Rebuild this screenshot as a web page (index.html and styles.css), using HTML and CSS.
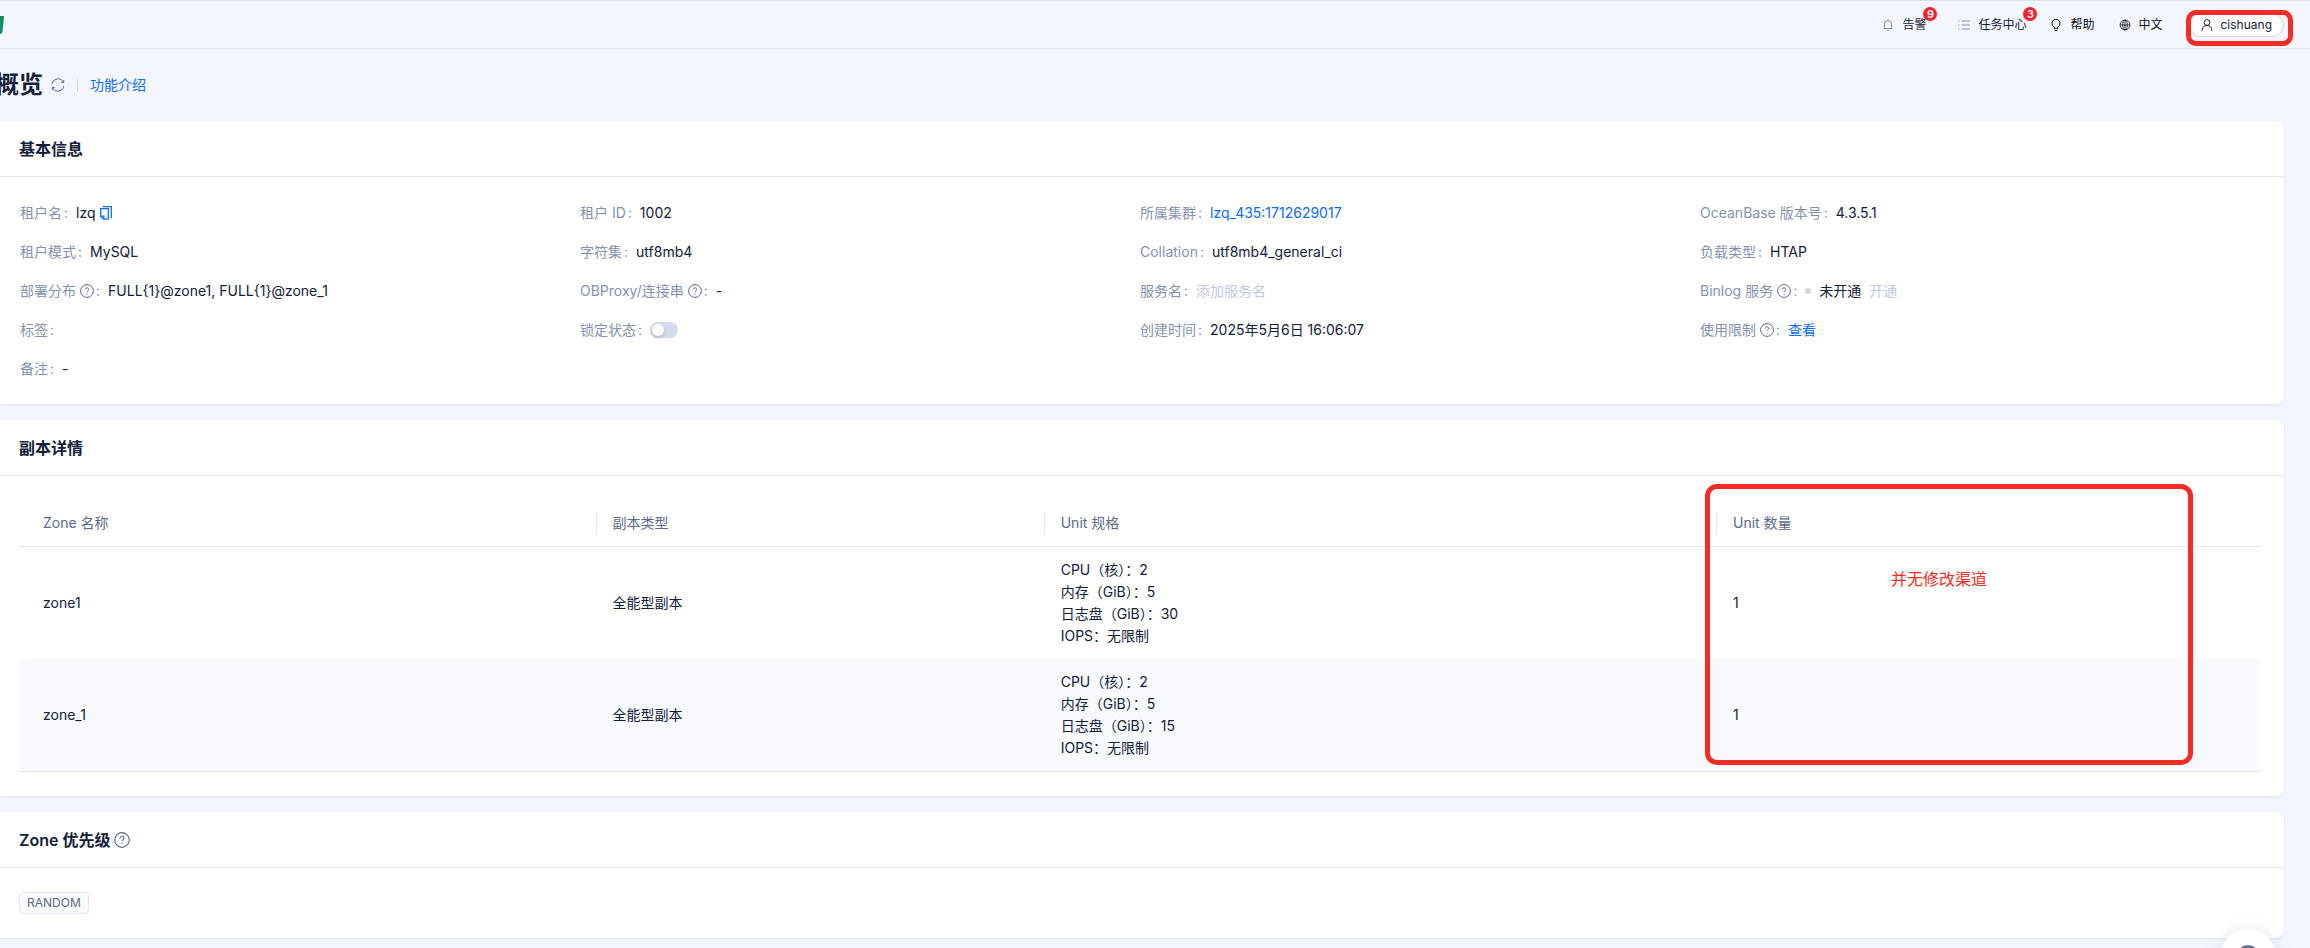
FILE: index.html
```html
<!DOCTYPE html>
<html lang="zh-CN">
<head>
<meta charset="utf-8">
<title>概览</title>
<link rel="stylesheet" href="styles.css">
</head>
<body>
<svg class="sprite" aria-hidden="true">
  <symbol id="help" viewBox="0 0 14 14"><circle cx="7" cy="7" r="6.4"/><path d="M5.200 5.600c0-1 .8-1.700 1.800-1.700s1.800.7 1.800 1.600c0 1.300-1.800 1.300-1.800 2.600M7 9.500v1"/></symbol>
</svg>
<header class="topbar">
  <a class="logo" href="#" aria-label="首页"><svg width="4" height="18" viewBox="0 0 4 18"><path d="M0 0h3q1 0 1 1L2.500 15.500Q2 18 0 18Z" fill="#0b9166"/></svg></a>
  <nav class="tools">
    <button class="tool tool-alert" type="button">
      <svg class="icon muted" viewBox="0 0 12 12"><path d="M2.500 9.500V5a3.500 3.500 0 0 1 7 0v4.500M1.300 9.500h9.400M6 1.500V.5M5 11.300h2"/></svg>
      <span>告警</span><span class="badge">9</span>
    </button>
    <button class="tool" type="button">
      <svg class="icon muted" viewBox="0 0 12 12"><path d="M3.500 2H12M3.500 6H12M3.500 10H12M.3 2h1.200M.3 6h1.200M.3 10h1.200"/></svg>
      <span>任务中心</span><span class="badge">3</span>
    </button>
    <button class="tool dark" type="button">
      <svg class="icon" viewBox="0 0 12 12"><path d="M4.200 9.200V7.900A4 4 0 1 1 7.800 7.900V9.200ZM4.300 11.300h3.400"/></svg>
      <span>帮助</span>
    </button>
    <button class="tool dark" type="button">
      <svg class="icon globe" viewBox="0 0 12 12"><circle cx="6" cy="6" r="4.900"/><ellipse cx="6" cy="6" rx="2.200" ry="4.900"/><path d="M6 1v10M1 6h10"/></svg>
      <span>中文</span>
    </button>
    <div class="user-wrap">
      <button class="user" type="button">
        <svg class="icon" viewBox="0 0 12 12"><circle cx="6" cy="3.500" r="2.900"/><path d="M1 11.600C1.200 8.500 3 6.500 6 6.500s4.800 2 5 5.100"/></svg>
        <span>cishuang</span>
      </button>
      <div class="mark mark-user"></div>
    </div>
  </nav>
</header>

<main class="page">
  <div class="page-head">
    <h1>概览</h1>
    <button class="refresh" type="button" aria-label="刷新"><svg viewBox="0 0 14 14"><path d="M1 6A6 6 0 0 1 12.300 4.200M12.700 2v2.500h-2.400M13 8A6 6 0 0 1 1.700 9.800M1.300 12V9.500h2.400"/></svg></button>
    <span class="sep"></span>
    <a href="#">功能介绍</a>
  </div>

  <section class="card">
    <h2>基本信息</h2>
    <dl class="info">
      <div><dt>租户名<i>:</i></dt><dd>lzq<button class="copy" type="button" aria-label="复制"><svg viewBox="0 0 12 14"><path d="M.7 2.700h7.600v10.500H3.800L.7 10.500ZM.7 10.200h3.200v3M2.800.6h8.500v11.700"/></svg></button></dd></div>
      <div><dt>租户 ID<i>:</i></dt><dd>1002</dd></div>
      <div><dt>所属集群<i>:</i></dt><dd><a href="#">lzq_435:1712629017</a></dd></div>
      <div><dt>OceanBase 版本号<i>:</i></dt><dd>4.3.5.1</dd></div>
      <div><dt>租户模式<i>:</i></dt><dd>MySQL</dd></div>
      <div><dt>字符集<i>:</i></dt><dd>utf8mb4</dd></div>
      <div><dt>Collation<i>:</i></dt><dd>utf8mb4_general_ci</dd></div>
      <div><dt>负载类型<i>:</i></dt><dd>HTAP</dd></div>
      <div><dt>部署分布<svg class="help"><use href="#help"/></svg><i>:</i></dt><dd>FULL{1}@zone1, FULL{1}@zone_1</dd></div>
      <div><dt>OBProxy/连接串<svg class="help"><use href="#help"/></svg><i>:</i></dt><dd>-</dd></div>
      <div><dt>服务名<i>:</i></dt><dd><button class="text-btn" type="button" disabled>添加服务名</button></dd></div>
      <div><dt>Binlog 服务<svg class="help"><use href="#help"/></svg><i>:</i></dt><dd><span class="dot"></span>未开通<button class="text-btn enable" type="button" disabled>开通</button></dd></div>
      <div><dt>标签<i>:</i></dt><dd></dd></div>
      <div><dt><label for="lock">锁定状态</label><i>:</i></dt><dd><input class="switch" id="lock" type="checkbox" role="switch"></dd></div>
      <div><dt>创建时间<i>:</i></dt><dd>2025年5月6日 16:06:07</dd></div>
      <div><dt>使用限制<svg class="help"><use href="#help"/></svg><i>:</i></dt><dd><a href="#">查看</a></dd></div>
      <div><dt>备注<i>:</i></dt><dd>-</dd></div>
    </dl>
  </section>

  <section class="card">
    <h2>副本详情</h2>
    <div class="replicas">
      <table>
        <colgroup><col><col class="c-type"><col class="c-spec"><col class="c-count"></colgroup>
        <thead><tr><th>Zone 名称</th><th>副本类型</th><th>Unit 规格</th><th>Unit 数量</th></tr></thead>
        <tbody>
          <tr><td>zone1</td><td>全能型副本</td><td>CPU（核）：2<br>内存（GiB）：5<br>日志盘（GiB）：30<br>IOPS：无限制</td><td>1</td></tr>
          <tr><td>zone_1</td><td>全能型副本</td><td>CPU（核）：2<br>内存（GiB）：5<br>日志盘（GiB）：15<br>IOPS：无限制</td><td>1</td></tr>
        </tbody>
      </table>
      <div class="mark mark-count"><span>并无修改渠道</span></div>
    </div>
  </section>

  <section class="card">
    <h2>Zone 优先级<svg class="help help-lg"><use href="#help"/></svg></h2>
    <div class="tags"><span class="tag">RANDOM</span></div>
  </section>
</main>

<button class="fab" type="button" aria-label="在线支持"><svg viewBox="0 0 24 24"><path d="M3 17v-5a9 9 0 0 1 18 0v5M3 13h4v7H3ZM17 13h4v7h-4Z"/></svg></button>
</body>
</html>
```
FILE: styles.css
```css
* { box-sizing: border-box; }
html { height: 100%; overflow: hidden; }
body {
  margin: 0;
  min-height: 100%;
  background: #f3f6fe;
  color: #132039;
  font-family: Inter, "Noto Sans CJK SC", sans-serif;
  font-size: 14px;
  line-height: 22px;
}
h1, h2, dl, dd { margin: 0; }
a { color: #0d6cf2; text-decoration: none; }
button {
  padding: 0;
  border: 0;
  background: none;
  color: inherit;
  font: inherit;
}
svg { display: block; fill: none; stroke: currentColor; }
.sprite { position: absolute; width: 0; height: 0; }
i { font-style: normal; }

.topbar {
  display: flex;
  justify-content: space-between;
  align-items: center;
  height: 49px;
  padding-right: 26px;
  border-top: 1px solid #dfe0e4;
  border-bottom: 1px solid #dde6f2;
  font-size: 12px;
}
.logo svg { stroke: none; }
.tools { display: flex; align-items: center; gap: 24px; }
.tool { display: flex; align-items: center; gap: 8px; position: relative; }
.tool-alert { margin-right: 8px; }
.dark { color: #060d1a; }
.icon { width: 12px; height: 12px; }
.globe { stroke-width: 0.8; }
.muted { color: #8592b0; }
.badge {
  position: absolute;
  top: -7px;
  right: -11px;
  width: 14px;
  height: 14px;
  border-radius: 7px;
  background: #f5222d;
  color: #fff;
  font-size: 11px;
  font-weight: 600;
  line-height: 14px;
  text-align: center;
}
.user-wrap { position: relative; margin-left: 2px; }
.user {
  display: flex;
  align-items: center;
  gap: 8px;
  height: 24px;
  padding: 0 11px;
  border: 1px solid #cdd5e4;
  border-radius: 12px;
  background: #fff;
}
.mark { position: absolute; border: 5px solid #f52c25; pointer-events: none; }
.mark-user { inset: -3px -9px -9px -3px; border-radius: 10px; }

.page { margin-left: -5px; padding-right: 26px; }
.page-head { display: flex; align-items: center; height: 72px; }
h1 { font-size: 24px; line-height: 32px; font-weight: 600; }
.refresh { margin-left: 8px; color: #5c6b8a; }
.refresh svg { width: 14px; height: 14px; }
.sep { width: 1px; height: 13px; margin: 0 12px; background: #cdd5e4; }

.card {
  margin-bottom: 16px;
  border-radius: 8px;
  background: #fff;
  box-shadow: 0 1px 3px rgba(19, 32, 57, 0.08);
}
h2 {
  display: flex;
  align-items: center;
  gap: 4px;
  height: 56px;
  padding: 0 24px;
  border-bottom: 1px solid #e2e8f3;
  font-size: 16px;
  font-weight: 600;
}
.info {
  display: grid;
  grid-template-columns: repeat(4, 1fr);
  gap: 16px 0;
  padding: 24px 24px 24px 25px;
}
.info > div { display: flex; align-items: center; height: 23px; }
dt { display: flex; align-items: center; color: #8592ad; white-space: nowrap; }
dt i { margin: 0 8px 0 2px; }
dd { display: flex; align-items: center; white-space: nowrap; }
.help { width: 14px; height: 14px; margin-left: 4px; color: #5c6b8a; }
.help-lg { width: 16px; height: 16px; margin-left: 0; }
.copy { margin-left: 4px; color: #0d6cf2; }
.copy svg { width: 12px; height: 14px; stroke-width: 1.3; }
.text-btn { color: #c1cae0; }
.enable { margin-left: 8px; }
.dot { width: 6px; height: 6px; margin-right: 8px; border-radius: 3px; background: #cdd5e4; }
.switch {
  appearance: none;
  width: 28px;
  height: 16px;
  margin: 0;
  padding: 2px;
  border-radius: 8px;
  background: #d5dceb;
}
.switch::before {
  content: "";
  display: block;
  width: 12px;
  height: 12px;
  border-radius: 6px;
  background: #fff;
  box-shadow: 0 2px 4px rgba(0, 35, 11, 0.2);
}

.replicas { position: relative; margin: 0 24px; padding: 24px 0; }
table { width: 100%; border-collapse: separate; border-spacing: 0; table-layout: fixed; }
.c-type { width: 20%; }
.c-spec { width: 30%; }
.c-count { width: 543px; }
th, td { padding: 12px 16px; text-align: left; }
th:first-child, td:first-child { padding-left: 24px; }
th {
  position: relative;
  border-bottom: 1px solid #e2e8f3;
  color: #5c6b8a;
  font-weight: 400;
}
th + th::before {
  content: "";
  position: absolute;
  left: -1px;
  top: 12px;
  width: 1px;
  height: 22px;
  background: #e2e8f3;
}
tbody tr:nth-child(even) { background: #f8fafe; }
tbody tr:last-child td { border-bottom: 1px solid #e2e8f3; }
.mark-count {
  top: 8px;
  right: 67px;
  width: 488px;
  height: 281px;
  padding-top: 79px;
  border-radius: 12px;
  color: #f52c25;
  font-size: 16px;
  text-align: center;
}
.mark-count span { padding-right: 20px; }

.tags { display: flex; padding: 24px; }
.tag {
  padding: 0 7px;
  border: 1px solid #e2e8f3;
  border-radius: 4px;
  background: #f8fafe;
  color: #5c6b8a;
  font-size: 12px;
  line-height: 20px;
}
.fab {
  position: fixed;
  right: 34px;
  bottom: -37px;
  display: grid;
  place-items: center;
  width: 56px;
  height: 56px;
  border-radius: 28px;
  background: #fff;
  box-shadow: 0 2px 20px rgba(19, 32, 57, 0.1);
  color: #5c6b8a;
}
.fab svg { width: 28px; height: 28px; stroke-width: 2; }
```
